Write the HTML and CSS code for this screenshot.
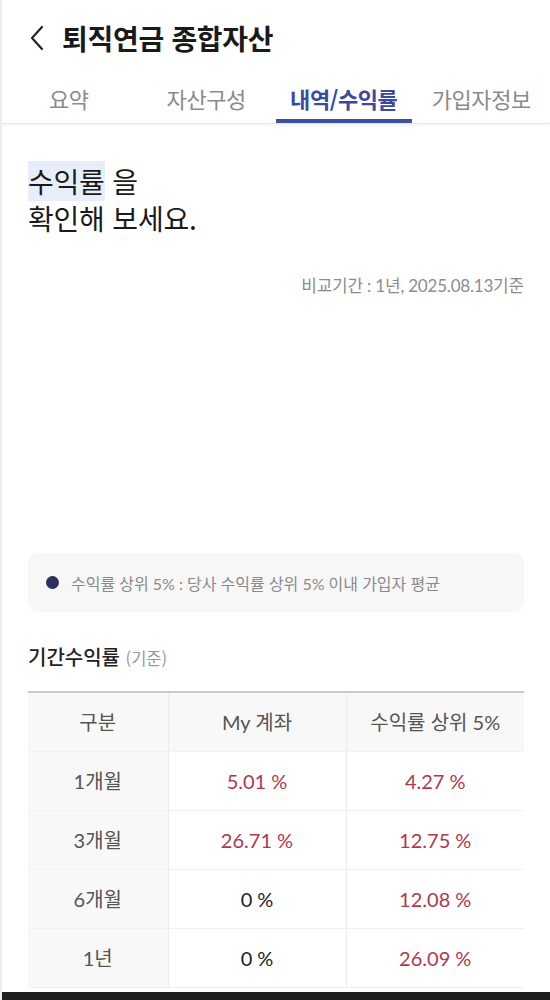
FILE: index.html
```html
<!DOCTYPE html>
<html lang="ko">
<head>
<meta charset="utf-8">
<link rel="stylesheet" href="styles.css">
</head>
<body>
<div class="page">
  <header class="appbar">
    <svg class="back" width="16" height="26" viewBox="0 0 16 26"><path d="M13 2 L3 13 L13 24" fill="none" stroke="#222" stroke-width="2.2" stroke-linecap="round" stroke-linejoin="round"/></svg>
    <h1 class="title">퇴직연금 종합자산</h1>
  </header>
  <nav class="tabs">
    <div class="tab">요약</div>
    <div class="tab">자산구성</div>
    <div class="tab active">내역/수익률</div>
    <div class="tab">가입자정보</div>
  </nav>
  <main class="content">
    <h2 class="headline"><span class="hl">수익률</span> 을<br>확인해 보세요.</h2>
    <p class="period">비교기간 : 1년, 2025.08.13기준</p>
    <div class="chart"></div>
    <div class="legend">
      <span class="dot"></span>
      <span class="legend-text">수익률 상위 5% : 당사 수익률 상위 5% 이내 가입자 평균</span>
    </div>
    <h3 class="section-title">기간수익률 <span class="sub">(기준)</span></h3>
    <table class="rates">
      <thead>
        <tr><th>구분</th><th>My 계좌</th><th>수익률 상위 5%</th></tr>
      </thead>
      <tbody>
        <tr><th>1개월</th><td class="up">5.01 %</td><td class="up">4.27 %</td></tr>
        <tr><th>3개월</th><td class="up">26.71 %</td><td class="up">12.75 %</td></tr>
        <tr><th>6개월</th><td>0 %</td><td class="up">12.08 %</td></tr>
        <tr><th>1년</th><td>0 %</td><td class="up">26.09 %</td></tr>
      </tbody>
    </table>
  </main>
  <div class="sysbar"></div>
</div>
</body>
</html>
```
FILE: styles.css
```css
* { box-sizing: border-box; }
html, body { margin: 0; padding: 0; background: #fff; }
body {
  font-family: "Noto Sans CJK KR", "Noto Sans", sans-serif;
  color: #1a1a1a;
}
.page {
  width: 550px;
  height: 1000px;
  overflow: hidden;
  border-left: 2px solid #ececec;
  display: flex;
  flex-direction: column;
}
.appbar {
  height: 76px;
  display: flex;
  align-items: center;
  padding-left: 27px;
  gap: 17px;
}
.back { flex: none; }
.title {
  margin: 0;
  font-size: 28px;
  font-weight: 700;
  letter-spacing: -0.3px;
  color: #1a1a1a;
}
.tabs {
  display: grid;
  grid-template-columns: repeat(4, 1fr);
  height: 48px;
  margin-left: -2px;
  border-bottom: 1px solid #e6e6e6;
  box-shadow: 0 2px 2px rgba(0,0,0,0.04);
}
.tab {
  display: flex;
  align-items: center;
  justify-content: center;
  font-size: 22px;
  color: #8a8a8a;
  padding-bottom: 4px;
  letter-spacing: -0.4px;
  white-space: nowrap;
}
.tab.active {
  color: #3b4aa0;
  font-weight: 700;
  border-bottom: 4px solid #3d4ea6;
  padding-bottom: 0;
  margin: 0 1px;
}
.content {
  padding: 0 26px 0 26px;
  flex: 1;
}
.headline {
  margin: 39px 0 0;
  font-size: 28px;
  line-height: 37px;
  font-weight: 400;
  color: #1a1a1a;
  letter-spacing: -0.2px;
}
.hl { background: #e8eef9; }
.period {
  margin: 38px 0 0;
  text-align: right;
  font-family: Lato, "Noto Sans CJK KR", sans-serif;
  font-size: 17px;
  line-height: 22px;
  color: #8c8c8c;
  letter-spacing: -0.2px;
}
.chart { height: 256px; }
.legend {
  height: 59px;
  background: #f7f7f8;
  border-radius: 10px;
  display: flex;
  align-items: center;
  padding-left: 18px;
  gap: 12px;
}
.dot {
  width: 13px;
  height: 13px;
  border-radius: 50%;
  background: #2b305f;
  flex: none;
}
.legend-text {
  font-family: Lato, "Noto Sans CJK KR", sans-serif;
  font-size: 16px;
  color: #8a8a8a;
}
.section-title {
  margin: 32px 0 0;
  font-size: 20px;
  line-height: 26px;
  font-weight: 500;
  color: #222;
}
.section-title .sub {
  font-size: 16.5px;
  color: #999;
  font-weight: 400;
}
.rates {
  margin-top: 20px;
  width: 100%;
  border-collapse: collapse;
  border-top: 2px solid #c9c9c9;
  font-family: Lato, "Noto Sans CJK KR", sans-serif;
  table-layout: fixed;
}
.rates th, .rates td {
  height: 59px;
  text-align: center;
  font-size: 20px;
  font-weight: 400;
  border-bottom: 1px solid #f1f1f1;
}
.rates th:first-child { width: 140px; }
.rates thead th {
  background: #f8f8f8;
  color: #555;
  border-left: 1px solid #ebebeb;
}
.rates thead th:first-child { border-left: none; }
.rates tbody th {
  background: #f8f8f8;
  color: #555;
}
.rates td {
  color: #222;
  border-left: 1px solid #ebebeb;
}
.rates td.up { color: #b0384c; }
.sysbar {
  height: 8px;
  background: #1e1e1e;
  flex: none;
}
```
